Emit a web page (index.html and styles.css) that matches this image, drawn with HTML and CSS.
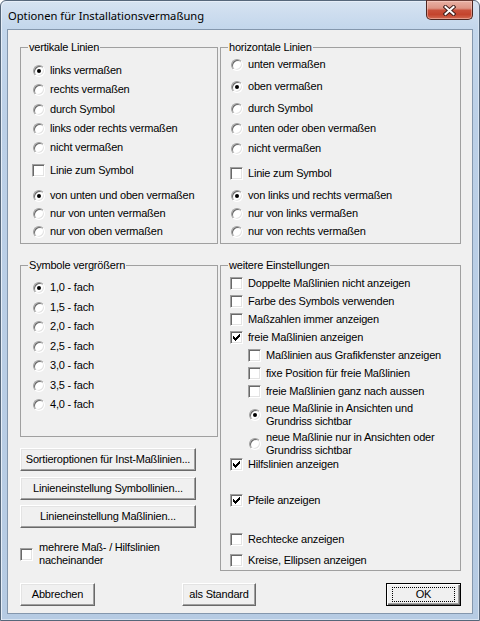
FILE: index.html
```html
<!DOCTYPE html>
<html lang="de">
<head>
<meta charset="utf-8">
<title>Optionen für Installationsvermaßung</title>
<link rel="stylesheet" href="styles.css">
</head>
<body>
<div class="window">
  <div class="titlebar">
    <span class="title">Optionen für Installationsvermaßung</span>
    <div class="close">
      <svg width="13" height="11" viewBox="0 0 13 11">
        <path d="M2.5 2 L10.5 9 M10.5 2 L2.5 9" stroke="#43201c" stroke-width="4" stroke-linecap="square" fill="none"/>
        <path d="M2.5 2 L10.5 9 M10.5 2 L2.5 9" stroke="#ffffff" stroke-width="2" stroke-linecap="square" fill="none"/>
      </svg>
    </div>
  </div>
  <div class="client">
    <div class="cols top">
      <fieldset class="group g-top">
        <legend>vertikale Linien</legend>
        <div class="gbody left-body">
          <div class="opt m10"><span class="radio on"></span><span>links vermaßen</span></div>
          <div class="opt m6"><span class="radio"></span><span>rechts vermaßen</span></div>
          <div class="opt m7"><span class="radio"></span><span>durch Symbol</span></div>
          <div class="opt m6"><span class="radio"></span><span>links oder rechts vermaßen</span></div>
          <div class="opt m6"><span class="radio"></span><span>nicht vermaßen</span></div>
          <div class="opt m10"><span class="check"></span><span>Linie zum Symbol</span></div>
          <div class="opt m12"><span class="radio on"></span><span>von unten und oben vermaßen</span></div>
          <div class="opt m5"><span class="radio"></span><span>nur von unten vermaßen</span></div>
          <div class="opt m5"><span class="radio"></span><span>nur von oben vermaßen</span></div>
        </div>
      </fieldset>
      <fieldset class="group g-top">
        <legend>horizontale Linien</legend>
        <div class="gbody right-body">
          <div class="opt m4"><span class="radio"></span><span>unten vermaßen</span></div>
          <div class="opt m9"><span class="radio on"></span><span>oben vermaßen</span></div>
          <div class="opt m9"><span class="radio"></span><span>durch Symbol</span></div>
          <div class="opt m7"><span class="radio"></span><span>unten oder oben vermaßen</span></div>
          <div class="opt m7"><span class="radio"></span><span>nicht vermaßen</span></div>
          <div class="opt m12"><span class="check"></span><span>Linie zum Symbol</span></div>
          <div class="opt m9"><span class="radio on"></span><span>von links und rechts vermaßen</span></div>
          <div class="opt m5"><span class="radio"></span><span>nur von links vermaßen</span></div>
          <div class="opt m5"><span class="radio"></span><span>nur von rechts vermaßen</span></div>
        </div>
      </fieldset>
    </div>

    <div class="cols mid">
      <div class="leftcol">
        <fieldset class="group g-sym">
          <legend>Symbole vergrößern</legend>
          <div class="gbody left-body">
            <div class="opt m9"><span class="radio on"></span><span>1,0 - fach</span></div>
            <div class="opt m7"><span class="radio"></span><span>1,5 - fach</span></div>
            <div class="opt m6"><span class="radio"></span><span>2,0 - fach</span></div>
            <div class="opt m7"><span class="radio"></span><span>2,5 - fach</span></div>
            <div class="opt m6"><span class="radio"></span><span>3,0 - fach</span></div>
            <div class="opt m7"><span class="radio"></span><span>3,5 - fach</span></div>
            <div class="opt m6"><span class="radio"></span><span>4,0 - fach</span></div>
          </div>
        </fieldset>
        <div class="btn wide m11">Sortieroptionen für Inst-Maßlinien...</div>
        <div class="btn wide m6">Linieneinstellung Symbollinien...</div>
        <div class="btn wide m5">Linieneinstellung Maßlinien...</div>
        <div class="opt multi m13 mehr"><span class="check"></span><span>mehrere Maß- / Hilfslinien<br>nacheinander</span></div>
      </div>

      <fieldset class="group g-weit">
        <legend>weitere Einstellungen</legend>
        <div class="gbody right-body">
          <div class="opt m5"><span class="check"></span><span>Doppelte Maßlinien nicht anzeigen</span></div>
          <div class="opt m5"><span class="check"></span><span>Farbe des Symbols verwenden</span></div>
          <div class="opt m5"><span class="check"></span><span>Maßzahlen immer anzeigen</span></div>
          <div class="opt m5"><span class="check"><svg class="tick" width="7" height="7" viewBox="0 0 7 7"><path d="M0 2h1v3H0z M1 3h1v3H1z M2 4h1v3H2z M3 3h1v3H3z M4 2h1v3H4z M5 1h1v3H5z M6 0h1v3H6z"/></svg></span><span>freie Maßlinien anzeigen</span></div>
          <div class="opt m5 sub"><span class="check"></span><span>Maßlinien aus Grafikfenster anzeigen</span></div>
          <div class="opt m5 sub"><span class="check"></span><span>fixe Position für freie Maßlinien</span></div>
          <div class="opt m5 sub"><span class="check"></span><span>freie Maßlinien ganz nach aussen</span></div>
          <div class="opt multi m4 sub"><span class="radio on"></span><span>neue Maßlinie in Ansichten und<br>Grundriss sichtbar</span></div>
          <div class="opt multi m3 sub"><span class="radio"></span><span>neue Maßlinie nur in Ansichten oder<br>Grundriss sichtbar</span></div>
          <div class="opt m1"><span class="check"><svg class="tick" width="7" height="7" viewBox="0 0 7 7"><path d="M0 2h1v3H0z M1 3h1v3H1z M2 4h1v3H2z M3 3h1v3H3z M4 2h1v3H4z M5 1h1v3H5z M6 0h1v3H6z"/></svg></span><span>Hilfslinien anzeigen</span></div>
          <div class="opt m23"><span class="check"><svg class="tick" width="7" height="7" viewBox="0 0 7 7"><path d="M0 2h1v3H0z M1 3h1v3H1z M2 4h1v3H2z M3 3h1v3H3z M4 2h1v3H4z M5 1h1v3H5z M6 0h1v3H6z"/></svg></span><span>Pfeile anzeigen</span></div>
          <div class="opt m26"><span class="check"></span><span>Rechtecke anzeigen</span></div>
          <div class="opt m8"><span class="check"></span><span>Kreise, Ellipsen anzeigen</span></div>
        </div>
      </fieldset>
    </div>

    <div class="footer">
      <div class="btn b-cancel">Abbrechen</div>
      <div class="btn b-std">als Standard</div>
      <div class="btn b-ok default"><span class="focus">OK</span></div>
    </div>
  </div>
</div>
</body>
</html>
```

FILE: styles.css
```css
* { box-sizing: border-box; }
html, body { margin: 0; padding: 0; }
body {
  width: 480px;
  height: 621px;
  overflow: hidden;
  background: #ffffff;
  font-family: "Liberation Sans", Arial, sans-serif;
  font-size: 11px;
  letter-spacing: -0.2px;
  color: #000;
}

.window {
  width: 480px;
  height: 621px;
  border: 1px solid #56677a;
  border-radius: 6px 6px 0 0;
  background: linear-gradient(180deg, #d6e3f1 0px, #c4d7ec 26px, #bcd0e7 120px, #b6cbe3 100%);
  box-shadow: inset 1px 1px 0 #e6eef8, inset -1px -1px 0 #d8e4f2;
  display: flex;
  flex-direction: column;
  padding: 0 6px 6px 6px;
}

.titlebar {
  height: 28px;
  flex: none;
  display: flex;
  justify-content: space-between;
  align-items: flex-start;
}
.title {
  font-family: "Noto Sans", "Open Sans", sans-serif;
  font-size: 11.2px;
  letter-spacing: 0;
  line-height: 16px;
  margin-top: 7px;
  padding-left: 1px;
  color: #000;
}
.close {
  width: 47px;
  height: 20px;
  margin-top: -1px;
  border: 1px solid #4d2620;
  border-top-color: #6a3b34;
  border-radius: 0 0 5px 5px;
  background: linear-gradient(180deg, #e9b1a4 0%, #de9585 40%, #c9503a 52%, #c4442d 75%, #d26a52 100%);
  box-shadow: inset 0 0 0 1px rgba(255, 220, 210, 0.45);
  display: flex;
  align-items: center;
  justify-content: center;
}

.client {
  flex: 1;
  border: 1px solid #8497ad;
  background: #f0f0f0;
  padding: 11px 11px 0 12px;
  display: flex;
  flex-direction: column;
}

.cols {
  display: grid;
  grid-template-columns: 198px 241px;
  column-gap: 2px;
  align-items: start;
}
.cols.mid { margin-top: 15px; }

.group {
  margin: 0;
  padding: 0;
  min-width: 0;
  border: 1px solid #a0a0a0;
}
.group legend {
  padding: 0 1px;
  margin-left: 7px;
  line-height: 13px;
  height: 13px;
}
.g-top { height: 203px; }
.g-sym { height: 178px; }
.g-weit { height: 312px; }

.gbody { display: flex; flex-direction: column; }
.left-body { padding-left: 11px; }
.right-body { padding-left: 9px; }

.opt {
  display: flex;
  align-items: center;
  gap: 5px;
  height: 13px;
  line-height: 13px;
  white-space: nowrap;
}
.opt.multi { height: 26px; }
.opt.sub { padding-left: 18px; }

.radio {
  flex: none;
  position: relative;
  width: 12px;
  height: 12px;
  margin-left: 1px;
  border-radius: 50%;
  background: #fff;
  border: 1px solid;
  border-color: #a0a0a0 #ffffff #ffffff #a0a0a0;
  box-shadow: inset 1px 1px 0 #696969, inset -1px -1px 0 #e3e3e3;
}
.radio.on::after {
  content: "";
  position: absolute;
  left: 3px;
  top: 3px;
  width: 4px;
  height: 4px;
  border-radius: 50%;
  background: #000;
}

.check {
  flex: none;
  width: 13px;
  height: 13px;
  background: #fff;
  border: 1px solid;
  border-color: #a0a0a0 #ffffff #ffffff #a0a0a0;
  box-shadow: inset 1px 1px 0 #696969, inset -1px -1px 0 #e3e3e3;
  display: flex;
  align-items: center;
  justify-content: center;
}
.tick { display: block; shape-rendering: crispEdges; fill: #000; }

.leftcol { display: flex; flex-direction: column; }

.btn {
  height: 23px;
  background: #f0f0f0;
  border: 1px solid;
  border-color: #ffffff #696969 #696969 #ffffff;
  box-shadow: inset -1px -1px 0 #a0a0a0, inset 1px 1px 0 #e3e3e3;
  display: flex;
  align-items: center;
  justify-content: center;
  white-space: nowrap;
  line-height: 13px;
}
.btn.wide { width: 176px; }
.mehr { gap: 6px; }

.footer {
  display: flex;
  margin-top: 12px;
}
.b-cancel { width: 75px; }
.b-std { width: 74px; margin-left: 87px; }
.b-ok { width: 75px; margin-left: 130px; }
.btn.default {
  border: 1px solid #000;
  box-shadow: inset 1px 1px 0 #ffffff, inset -1px -1px 0 #696969, inset -2px -2px 0 #a0a0a0;
}
.focus {
  width: 63px;
  height: 15px;
  border: 1px dotted #000;
  display: flex;
  align-items: center;
  justify-content: center;
}

.m1 { margin-top: 1px; }
.m3 { margin-top: 3px; }
.m4 { margin-top: 4px; }
.m5 { margin-top: 5px; }
.m6 { margin-top: 6px; }
.m7 { margin-top: 7px; }
.m8 { margin-top: 8px; }
.m9 { margin-top: 9px; }
.m10 { margin-top: 10px; }
.m11 { margin-top: 11px; }
.m12 { margin-top: 12px; }
.m13 { margin-top: 13px; }
.m23 { margin-top: 23px; }
.m26 { margin-top: 26px; }
```
